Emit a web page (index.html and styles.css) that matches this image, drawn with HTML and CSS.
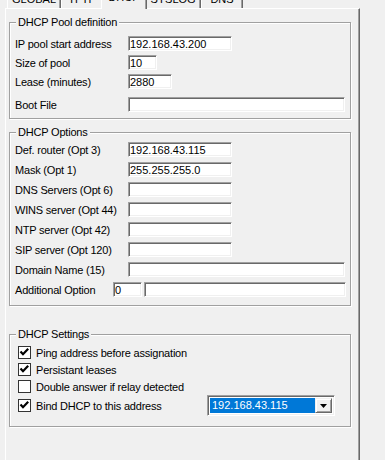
FILE: index.html
```html
<!DOCTYPE html>
<html lang="en">
<head>
    <meta charset="UTF-8">
    <title>DHCP</title>
    <link rel="stylesheet" href="styles.css">
</head>
<body>

    <div class="tabs">
        <div class="tab tab-global">GLOBAL</div>
        <div class="tab tab-tftp">TFTP</div>
        <div class="tab tab-dhcp aktif">DHCP</div>
        <div class="tab tab-syslog">SYSLOG</div>
        <div class="tab tab-dns">DNS</div>
    </div>

    <div class="panel">
        <fieldset class="grup grupHavuz">
            <legend>DHCP Pool definition</legend>
            <div class="satir"><span class="etiket">IP pool start address</span><input class="kutu w-ip" value="192.168.43.200"></div>
            <div class="satir ek1"><span class="etiket">Size of pool</span><input class="kutu w-kisa" value="10"></div>
            <div class="satir ek1"><span class="etiket">Lease (minutes)</span><input class="kutu w-orta" value="2880"></div>
            <div class="satir ek5"><span class="etiket">Boot File</span><input class="kutu w-uzun" value=""></div>
        </fieldset>

        <fieldset class="grup grupSecenek">
            <legend>DHCP Options</legend>
            <div class="satir"><span class="etiket">Def. router (Opt 3)</span><input class="kutu w-ip" value="192.168.43.115"></div>
            <div class="satir"><span class="etiket">Mask (Opt 1)</span><input class="kutu w-ip" value="255.255.255.0"></div>
            <div class="satir"><span class="etiket">DNS Servers (Opt 6)</span><input class="kutu w-ip" value=""></div>
            <div class="satir"><span class="etiket">WINS server (Opt 44)</span><input class="kutu w-ip" value=""></div>
            <div class="satir"><span class="etiket">NTP server (Opt 42)</span><input class="kutu w-ip" value=""></div>
            <div class="satir"><span class="etiket">SIP server (Opt 120)</span><input class="kutu w-ip" value=""></div>
            <div class="satir"><span class="etiket">Domain Name (15)</span><input class="kutu w-uzun" value=""></div>
            <div class="satir"><span class="etiket etiketKisa">Additional Option</span><input class="kutu w-kisa" value="0"><input class="kutu w-ek" value=""></div>
        </fieldset>

        <fieldset class="grup grupAyar">
            <legend>DHCP Settings</legend>
            <div class="secim">
                <span class="onay"><svg width="11" height="11" viewBox="0 0 11 11"><path d="M1.5 4.5 L4 7.2 L9.2 1.8" fill="none" stroke="#000" stroke-width="2.2"/></svg></span>
                <span>Ping address before assignation</span>
            </div>
            <div class="secim">
                <span class="onay"><svg width="11" height="11" viewBox="0 0 11 11"><path d="M1.5 4.5 L4 7.2 L9.2 1.8" fill="none" stroke="#000" stroke-width="2.2"/></svg></span>
                <span>Persistant leases</span>
            </div>
            <div class="secim">
                <span class="onay"></span>
                <span>Double answer if relay detected</span>
            </div>
            <div class="secim secimSon">
                <span class="onay"><svg width="11" height="11" viewBox="0 0 11 11"><path d="M1.5 4.5 L4 7.2 L9.2 1.8" fill="none" stroke="#000" stroke-width="2.2"/></svg></span>
                <span>Bind DHCP to this address</span>
                <div class="combo">
                    <span class="comboDeger">192.168.43.115</span>
                    <span class="comboBtn"><svg width="7" height="4" viewBox="0 0 7 4"><path d="M0 0h7l-3.5 4z" fill="#000"/></svg></span>
                </div>
            </div>
        </fieldset>
    </div>

</body>
</html>
```

FILE: styles.css
```css
html {
    background-color: #f0f0f0;
}

body {
    width: 385px;
    height: 460px;
    margin: 0;
    padding: 0;
    overflow: hidden;
    font-family: "Liberation Sans", Arial, sans-serif;
    font-size: 11px;
    letter-spacing: -0.2px;
    color: #000;
    background-color: #f0f0f0;
}

/* sekmeler - ustte yarim gorunuyor */
.tabs {
    display: flex;
    align-items: flex-end;
    height: 8px;
    padding-left: 7px;
    position: relative;
    z-index: 2;
}

.tab {
    box-sizing: border-box;
    height: 16px;
    padding-top: 1px;
    line-height: 13px;
    text-align: center;
    letter-spacing: 0;
    border-left: 1px solid #fff;
    border-right: 1px solid #696969;
    box-shadow: inset -1px 0 #a0a0a0;
    background-color: #f0f0f0;
}

.tab-global { width: 54px; }
.tab-tftp { width: 42px; }
.tab-dhcp { width: 46px; }
.tab-syslog { width: 56px; }
.tab-dns { width: 42px; }

.aktif {
    height: 19px;
    margin: 0 -2px -1px -2px;
    position: relative;
    z-index: 1;
}

.panel {
    box-sizing: border-box;
    width: 355px;
    min-height: 460px;
    margin-left: 5px;
    border-top: 1px solid #fff;
    border-left: 1px solid #fff;
    border-right: 1px solid #696969;
    box-shadow: inset -1px 0 #a0a0a0;
    overflow: hidden;
}

.grup {
    display: flex;
    flex-direction: column;
    min-width: 0;
    margin: 0 8px 0 3px;
    padding: 0 4px 0 5px;
    border: 1px solid #a0a0a0;
    box-shadow: inset 1px 1px #fff, 1px 1px #fff;
}

.grup legend {
    margin-left: 1px;
    padding: 0 2px;
    line-height: 13px;
    background-color: #f0f0f0;
}

.grupHavuz {
    margin-top: 7px;
    padding-top: 7px;
    padding-bottom: 6px;
    gap: 3px;
}

.grupSecenek {
    margin-top: 7px;
    padding-top: 3px;
    padding-bottom: 8px;
    gap: 5px;
}

.grupAyar {
    margin-top: 22px;
    padding-top: 3px;
    padding-bottom: 10px;
}

.satir {
    display: flex;
    align-items: center;
    height: 15px;
}

.ek1 { margin-top: 1px; }
.ek5 { margin-top: 5px; }

.etiket {
    width: 113px;
    flex: none;
}

.etiketKisa {
    width: 98px;
}

.kutu {
    box-sizing: border-box;
    height: 15px;
    margin: 0;
    padding: 0 0 0 1px;
    font-family: "Liberation Sans", Arial, sans-serif;
    font-size: 11px;
    letter-spacing: 0;
    color: #000;
    background-color: #fff;
    border: 1px solid;
    border-color: #a0a0a0 #fff #fff #a0a0a0;
    box-shadow: inset 1px 1px #696969, inset -1px -1px #f0f0f0;
    outline: none;
}

.w-ip { width: 104px; }
.w-kisa { width: 29px; }
.w-orta { width: 44px; }
.w-uzun { width: 217px; }
.w-ek { width: 202px; margin-left: 2px; }

.secim {
    display: flex;
    align-items: center;
    height: 17px;
    padding-left: 3px;
}

.secimSon {
    height: 21px;
}

.onay {
    box-sizing: border-box;
    width: 13px;
    height: 13px;
    margin-right: 5px;
    flex: none;
    display: flex;
    align-items: center;
    justify-content: center;
    background-color: #fff;
    border: 1px solid #333;
}

.combo {
    box-sizing: border-box;
    display: flex;
    width: 128px;
    height: 21px;
    margin-left: auto;
    margin-right: 11px;
    padding: 2px;
    background-color: #fff;
    border: 1px solid;
    border-color: #a0a0a0 #fff #fff #a0a0a0;
    box-shadow: inset 1px 1px #696969, inset -1px -1px #f0f0f0;
}

.comboDeger {
    flex: 1;
    padding-left: 2px;
    line-height: 15px;
    letter-spacing: 0;
    color: #fff;
    background-color: #0078d7;
}

.comboBtn {
    box-sizing: border-box;
    width: 17px;
    display: flex;
    align-items: center;
    justify-content: center;
    background-color: #f0f0f0;
    border-top: 1px solid #f0f0f0;
    border-left: 1px solid #f0f0f0;
    border-right: 1px solid #696969;
    border-bottom: 1px solid #696969;
    box-shadow: inset 1px 1px #fff, inset -1px -1px #a0a0a0;
}
```
